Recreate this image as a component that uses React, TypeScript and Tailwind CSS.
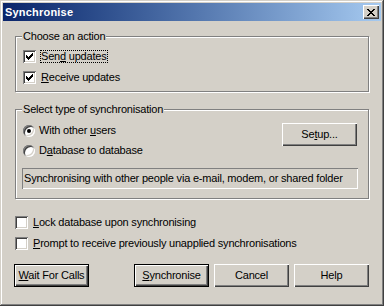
import React from "react";

const FONT = { fontFamily: '"Liberation Sans", Arial, sans-serif' };

function Check() {
  const cols = [2, 3, 4, 3, 2, 1, 0];
  const d = cols.map((r, i) => `M${3 + i} ${3 + r}h1v3h-1z`).join("");
  return (
    <svg width="13" height="13" viewBox="0 0 13 13" shapeRendering="crispEdges" className="absolute left-0 top-0">
      <path d={d} fill="#000" />
    </svg>
  );
}

function CheckBox({ checked }: { checked?: boolean }) {
  return (
    <span className="relative block w-[13px] h-[13px] shrink-0 bg-white shadow-[inset_1px_1px_0_#808080,inset_-1px_-1px_0_#fff,inset_2px_2px_0_#404040,inset_-2px_-2px_0_#d4d0c8]">
      {checked && <Check />}
    </span>
  );
}

function Radio({ checked }: { checked?: boolean }) {
  return (
    <span className="relative flex items-center justify-center w-[12px] h-[12px] shrink-0 rounded-full bg-white shadow-[inset_1px_1px_0_#808080,inset_-1px_-1px_0_#fff,inset_2px_2px_0_#404040,inset_-2px_-2px_0_#d4d0c8]">
      {checked && <span className="block w-[4px] h-[4px] rounded-full bg-black" />}
    </span>
  );
}

function Btn({ children, def }: { children: React.ReactNode; def?: boolean }) {
  if (def) {
    return (
      <div className="w-[75px] h-[23px] shrink-0 border border-black">
        <div className="w-full h-full flex items-center justify-center text-[11px] leading-[13px] text-black shadow-[inset_1px_1px_0_#fff,inset_-1px_-1px_0_#404040,inset_-2px_-2px_0_#808080]">
          {children}
        </div>
      </div>
    );
  }
  return (
    <div className="w-[75px] h-[23px] shrink-0 flex items-center justify-center text-[11px] leading-[13px] text-black shadow-[inset_1px_1px_0_#fff,inset_-1px_-1px_0_#404040,inset_-2px_-2px_0_#808080]">
      {children}
    </div>
  );
}

function U({ children }: { children: React.ReactNode }) {
  return <span className="underline underline-offset-[1px]">{children}</span>;
}

export default function App() {
  return (
    <div style={FONT} className="w-[384px] h-[306px] bg-[#d4d0c8] p-[3px] flex flex-col text-black shadow-[inset_-1px_-1px_0_#404040,inset_1px_1px_0_#d4d0c8,inset_-2px_-2px_0_#808080,inset_2px_2px_0_#fff]">
      {/* Title bar */}
      <div className="h-[18px] shrink-0 flex items-center justify-between pl-[2px] pr-[2px] bg-gradient-to-r from-[#0a246a] to-[#a6caf0]">
        <span className="text-white font-bold text-[11px] leading-[13px] tracking-[0.2px]">Synchronise</span>
        <div className="w-[16px] h-[14px] bg-[#d4d0c8] flex items-center justify-center shadow-[inset_1px_1px_0_#fff,inset_-1px_-1px_0_#404040,inset_-2px_-2px_0_#808080]">
          <svg width="8" height="7" viewBox="0 0 8 7" shapeRendering="crispEdges">
            <path d="M0 0h2v1h-2zM6 0h2v1h-2zM1 1h2v1h-2zM5 1h2v1h-2zM2 2h4v1h-4zM3 3h2v1h-2zM2 4h4v1h-4zM1 5h2v1h-2zM5 5h2v1h-2zM0 6h2v1h-2zM6 6h2v1h-2z" fill="#000" />
          </svg>
        </div>
      </div>

      <div className="flex flex-col pl-[12px] text-[11px] leading-[13px] tracking-[-0.2px]">
        {/* Group 1 */}
        <div className="relative mt-[15px] w-[354px] h-[56px] border border-[#808080] shadow-[inset_1px_1px_0_#fff,1px_1px_0_#fff] pl-[7px] pt-[13px]">
          <span className="absolute -top-[7px] left-[6px] px-[1px] bg-[#d4d0c8]">Choose an action</span>
          <div className="flex flex-col gap-[8px]">
            <div className="flex items-center gap-[4px] h-[13px]">
              <CheckBox checked />
              <span className="border border-dotted border-black px-[0px] leading-[11px] h-[13px]">
                Sen<U>d</U> updates
              </span>
            </div>
            <div className="flex items-center gap-[4px] h-[13px]">
              <CheckBox checked />
              <span className="border border-transparent leading-[11px] h-[13px]">
                <U>R</U>eceive updates
              </span>
            </div>
          </div>
        </div>

        {/* Group 2 */}
        <div className="relative mt-[17px] w-[354px] h-[90px] border border-[#808080] shadow-[inset_1px_1px_0_#fff,1px_1px_0_#fff] pl-[6px] pr-[11px] pt-[13px]">
          <span className="absolute -top-[7px] left-[6px] px-[1px] bg-[#d4d0c8]">Select type of synchronisation</span>
          <div className="flex justify-between items-start">
            <div className="flex flex-col gap-[7px] pt-[1px] pl-[1px]">
              <div className="flex items-center gap-[4px] h-[13px]">
                <Radio checked />
                <span>With other <U>u</U>sers</span>
              </div>
              <div className="flex items-center gap-[4px] h-[13px]">
                <Radio />
                <span>D<U>a</U>tabase to database</span>
              </div>
            </div>
            <Btn>
              <span>Se<U>t</U>up...</span>
            </Btn>
          </div>
          <div className="mt-[11px] w-[336px] h-[21px] flex items-center pl-[2px] shadow-[inset_1px_1px_0_#808080,inset_-1px_-1px_0_#fff]">
            Synchronising with other people via e-mail, modem, or shared folder
          </div>
        </div>

        {/* Options */}
        <div className="mt-[17px] flex flex-col gap-[8px]">
          <div className="flex items-center gap-[5px] h-[13px]">
            <CheckBox />
            <span><U>L</U>ock database upon synchronising</span>
          </div>
          <div className="flex items-center gap-[5px] h-[13px]">
            <CheckBox />
            <span><U>P</U>rompt to receive previously unapplied synchronisations</span>
          </div>
        </div>

        {/* Buttons */}
        <div className="mt-[14px] flex -ml-[1px]">
          <Btn def>
            <span><U>W</U>ait For Calls</span>
          </Btn>
          <div className="ml-[45px] flex gap-[5px]">
            <Btn def>
              <span><U>S</U>ynchronise</span>
            </Btn>
            <Btn>Cancel</Btn>
            <Btn>Help</Btn>
          </div>
        </div>
      </div>
    </div>
  );
}
